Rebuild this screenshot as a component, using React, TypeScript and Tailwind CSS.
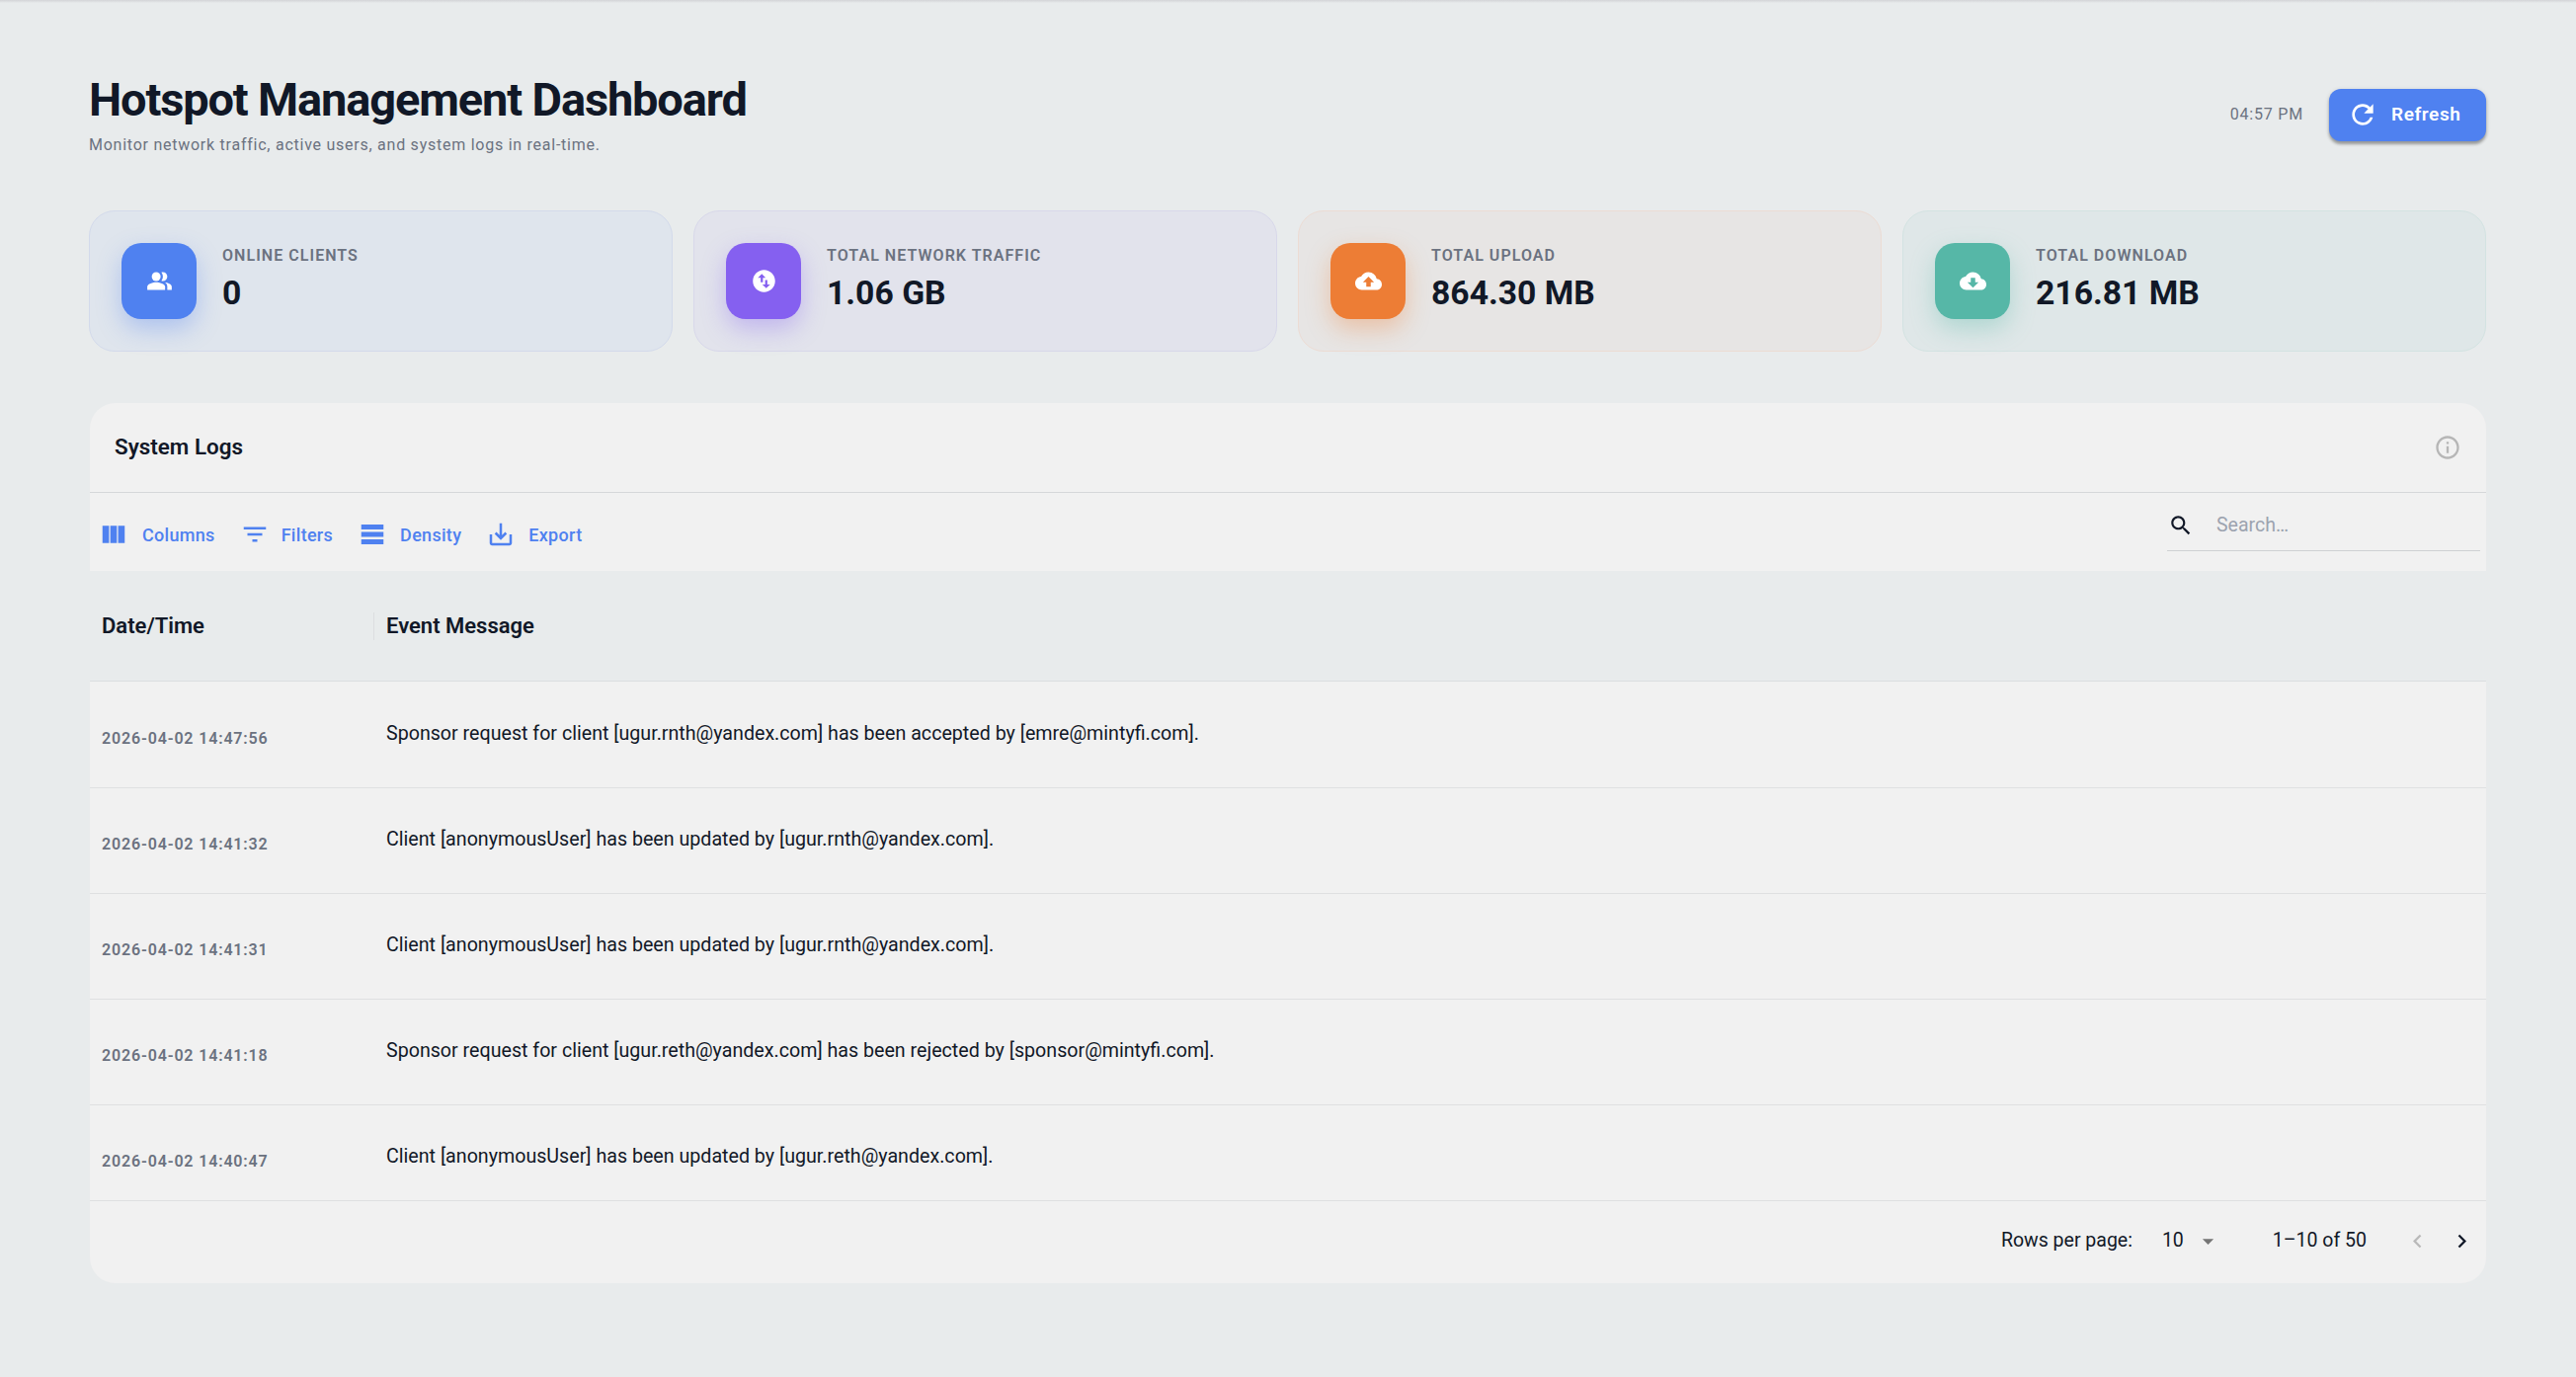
import type { ReactNode } from "react"

function Icon({ className, children }: { className: string; children: ReactNode }) {
  return (
    <svg viewBox="0 0 24 24" fill="currentColor" className={className}>
      {children}
    </svg>
  )
}

const cloud =
  "M19.35 10.04C18.67 6.59 15.64 4 12 4 9.11 4 6.6 5.64 5.35 8.04 2.34 8.36 0 10.91 0 14c0 3.31 2.69 6 6 6h13c2.76 0 5-2.24 5-5 0-2.64-2.05-4.78-4.65-4.96z"

const stats = [
  {
    label: "ONLINE CLIENTS",
    value: "0",
    card: "bg-[#dfe5ed] border-[#d3daeb]",
    box: "bg-[#4f81f0] shadow-[0_10px_24px_rgba(79,129,240,0.35)]",
    icon: (
      <>
        <path d="M16.67 13.13C18.04 14.06 19 15.32 19 17v3h4v-3c0-2.18-3.57-3.47-6.33-3.87z" />
        <circle cx="9" cy="8" r="4" />
        <path d="M15 12c2.21 0 4-1.79 4-4s-1.79-4-4-4c-.47 0-.91.1-1.33.24C14.5 5.27 15 6.58 15 8s-.5 2.73-1.33 3.76c.42.14.86.24 1.33.24z" />
        <path d="M9 13c-2.67 0-8 1.34-8 4v3h16v-3c0-2.66-5.33-4-8-4z" />
      </>
    ),
  },
  {
    label: "TOTAL NETWORK TRAFFIC",
    value: "1.06 GB",
    card: "bg-[#e2e3ec] border-[#d8d8ea]",
    box: "bg-[#8560f0] shadow-[0_10px_24px_rgba(133,96,240,0.35)]",
    icon: (
      <path d="M12 2C6.48 2 2 6.48 2 12s4.48 10 10 10 10-4.48 10-10S17.52 2 12 2zM6.5 9L10 5.5 13.5 9H11v4H9V9H6.5zm11 6L14 18.5 10.5 15H13v-4h2v4h2.5z" />
    ),
  },
  {
    label: "TOTAL UPLOAD",
    value: "864.30 MB",
    card: "bg-[#e7e5e4] border-[#ecdcd4]",
    box: "bg-[#ed7d35] shadow-[0_10px_24px_rgba(237,125,53,0.35)]",
    icon: <path d={cloud + "M14 13v4h-4v-4H7l5-5 5 5h-3z"} />,
  },
  {
    label: "TOTAL DOWNLOAD",
    value: "216.81 MB",
    card: "bg-[#dfe7e8] border-[#d3e3e2]",
    box: "bg-[#56b7a7] shadow-[0_10px_24px_rgba(86,183,167,0.35)]",
    icon: <path d={cloud + "M17 13l-5 5-5-5h3V9h4v4h3z"} />,
  },
]

const tools = [
  {
    label: "Columns",
    gap: "mr-[25px] gap-[14px]",
    icon: <path d="M14.67 5v14H9.33V5h5.34zm1 14H21V5h-5.33v14zm-7.34 0V5H3v14h5.33z" />,
  },
  {
    label: "Filters",
    gap: "mr-[25px] gap-[12px]",
    icon: <path d="M10 18h4v-2h-4v2zM3 6v2h18V6H3zm3 7h12v-2H6v2z" />,
  },
  {
    label: "Density",
    gap: "mr-[25px] gap-[13px]",
    icon: <path d="M21 8H3V4h18v4zm0 2H3v4h18v-4zm0 6H3v4h18v-4z" />,
  },
  {
    label: "Export",
    gap: "gap-[13px]",
    icon: <path d="M19 12v7H5v-7H3v7c0 1.1.9 2 2 2h14c1.1 0 2-.9 2-2v-7h-2zm-6 .67l2.59-2.58L17 11.5l-5 5-5-5 1.41-1.41L11 12.67V3h2z" />,
  },
]

const logs = [
  ["2026-04-02 14:47:56", "Sponsor request for client [ugur.rnth@yandex.com] has been accepted by [emre@mintyfi.com]."],
  ["2026-04-02 14:41:32", "Client [anonymousUser] has been updated by [ugur.rnth@yandex.com]."],
  ["2026-04-02 14:41:31", "Client [anonymousUser] has been updated by [ugur.rnth@yandex.com]."],
  ["2026-04-02 14:41:18", "Sponsor request for client [ugur.reth@yandex.com] has been rejected by [sponsor@mintyfi.com]."],
  ["2026-04-02 14:40:47", "Client [anonymousUser] has been updated by [ugur.reth@yandex.com]."],
]

export default function App() {
  return (
    <div className="min-h-screen bg-[#e8ebec] font-[Roboto,sans-serif] text-[#111827]">
      <div className="h-[3px] bg-gradient-to-b from-[#d3d4d7] to-[#e8ebec]" />
      <div className="pl-[90px] pr-[91px] pt-[70px]">
        {/* Header */}
        <div className="flex h-[86px] items-center justify-between">
          <div>
            <h1 className="text-[47px] font-bold leading-[55px] tracking-[-1.15px]">Hotspot Management Dashboard</h1>
            <p className="mt-[6px] text-[16px] leading-[25px] tracking-[0.75px] text-[#6b7280]">
              Monitor network traffic, active users, and system logs in real-time.
            </p>
          </div>
          <div className="flex items-center gap-[26px]">
            <span className="text-[16px] tracking-[0.8px] text-[#6b7280]">04:57 PM</span>
            <button className="flex h-[53px] w-[159px] items-center gap-[13px] rounded-[12px] bg-[#4f81f0] pl-[18px] text-[19px] font-semibold tracking-[0.6px] text-white shadow-[0_3px_3px_rgba(0,0,0,0.3),0_1px_5px_rgba(0,0,0,0.12)]">
              <Icon className="size-[32px]">
                <path d="M17.65 6.35C16.2 4.9 14.21 4 12 4c-4.42 0-7.99 3.58-7.99 8s3.57 8 7.99 8c3.73 0 6.84-2.55 7.73-6h-2.08c-.82 2.33-3.04 4-5.65 4-3.31 0-6-2.69-6-6s2.69-6 6-6c1.66 0 3.14.69 4.22 1.78L13 11h7V4l-2.35 2.35z" />
              </Icon>
              Refresh
            </button>
          </div>
        </div>

        {/* Stat cards */}
        <div className="mt-[54px] grid grid-cols-4 gap-[21px]">
          {stats.map((s) => (
            <div key={s.label} className={`flex h-[143px] items-center rounded-[26px] border pl-[32px] ${s.card}`}>
              <div className={`flex h-[77px] w-[76px] items-center justify-center rounded-[20px] text-white ${s.box}`}>
                <Icon className="size-[27px]">{s.icon}</Icon>
              </div>
              <div className="ml-[26px] pb-[3px]">
                <div className="text-[16px] font-semibold leading-[24px] tracking-[1.05px] text-[#6b7280]">{s.label}</div>
                <div className="mt-[3px] text-[33.7px] font-bold leading-[45px]">{s.value}</div>
              </div>
            </div>
          ))}
        </div>

        {/* System logs */}
        <div className="ml-px mt-[52px] overflow-hidden rounded-[26px] bg-[#f1f1f1]">
          <div className="flex h-[91px] items-center justify-between border-b border-[#d5d7d9] pl-[25px] pr-[25px]">
            <h2 className="text-[22.4px] font-semibold">System Logs</h2>
            <Icon className="size-[28px] text-[#b6b6b6]">
              <path d="M11 7h2v2h-2zm0 4h2v6h-2zm1-9C6.48 2 2 6.48 2 12s4.48 10 10 10 10-4.48 10-10S17.52 2 12 2zm0 18c-4.41 0-8-3.59-8-8s3.59-8 8-8 8 3.59 8 8-3.59 8-8 8z" />
            </Icon>
          </div>

          <div className="flex h-[79px] items-start justify-between pl-[9px] pr-[6px]">
            <div className="mt-[27px] flex items-center">
              {tools.map((t) => (
                <div key={t.label} className={`flex items-center text-[18px] font-medium tracking-[0.3px] text-[#4f81f0] ${t.gap}`}>
                  <Icon className="size-[30px]">{t.icon}</Icon>
                  {t.label}
                </div>
              ))}
            </div>
            <div className="mt-[12px] flex h-[47px] w-[317px] items-center border-b border-[#cfd1d3] pb-[4px] pl-px">
              <Icon className="size-[26px]">
                <path d="M15.5 14h-.79l-.28-.27C15.41 12.59 16 11.11 16 9.5 16 5.91 13.09 3 9.5 3S3 5.91 3 9.5 5.91 16 9.5 16c1.61 0 3.09-.59 4.23-1.57l.27.28v.79l5 4.99L20.49 19l-4.99-5zm-6 0C7.01 14 5 11.99 5 9.5S7.01 5 9.5 5 14 7.01 14 9.5 11.99 14 9.5 14z" />
              </Icon>
              <span className="ml-[23px] text-[19.5px] text-[#9ca3af]">Search…</span>
            </div>
          </div>

          <div className="flex h-[112px] items-center border-b border-[#dcdee0] bg-[#e8ebec] text-[22px] font-semibold">
            <div className="w-[287px] pl-[12px]">Date/Time</div>
            <div className="flex items-center">
              <span className="h-[28px] w-px bg-[#dcdee0]" />
              <span className="pl-[12px]">Event Message</span>
            </div>
          </div>

          <div className="h-[525px] overflow-hidden pt-px">
            {logs.map(([time, message]) => (
              <div key={time} className="flex h-[107px] shrink-0 items-center border-b border-[#dfe0e1] pb-[2px]">
                <div className="w-[287px] pl-[12px] pt-[9px] text-[16px] font-semibold tracking-[0.85px] text-[#6b7280]">{time}</div>
                <div className="pl-[13px] text-[19.65px]">{message}</div>
              </div>
            ))}
          </div>

          {/* Pagination */}
          <div className="flex h-[84px] items-center justify-end border-t border-[#dfe0e1] pb-[3px] text-[19.5px]">
            <span>Rows per page:</span>
            <span className="ml-[30px]">10</span>
            <Icon className="ml-[11px] size-[27px] text-[#757575]">
              <path d="M7 10l5 5 5-5z" />
            </Icon>
            <span className="ml-[52px]">1–10 of 50</span>
            <Icon className="ml-[38px] size-[27px] text-[#b9b9b9]">
              <path d="M15.41 16.59L10.83 12l4.58-4.59L14 6l-6 6 6 6 1.41-1.41z" />
            </Icon>
            <Icon className="ml-[18px] mr-[11px] size-[27px]">
              <path d="M8.59 16.59L13.17 12 8.59 7.41 10 6l6 6-6 6-1.41-1.41z" />
            </Icon>
          </div>
        </div>
      </div>
    </div>
  )
}
